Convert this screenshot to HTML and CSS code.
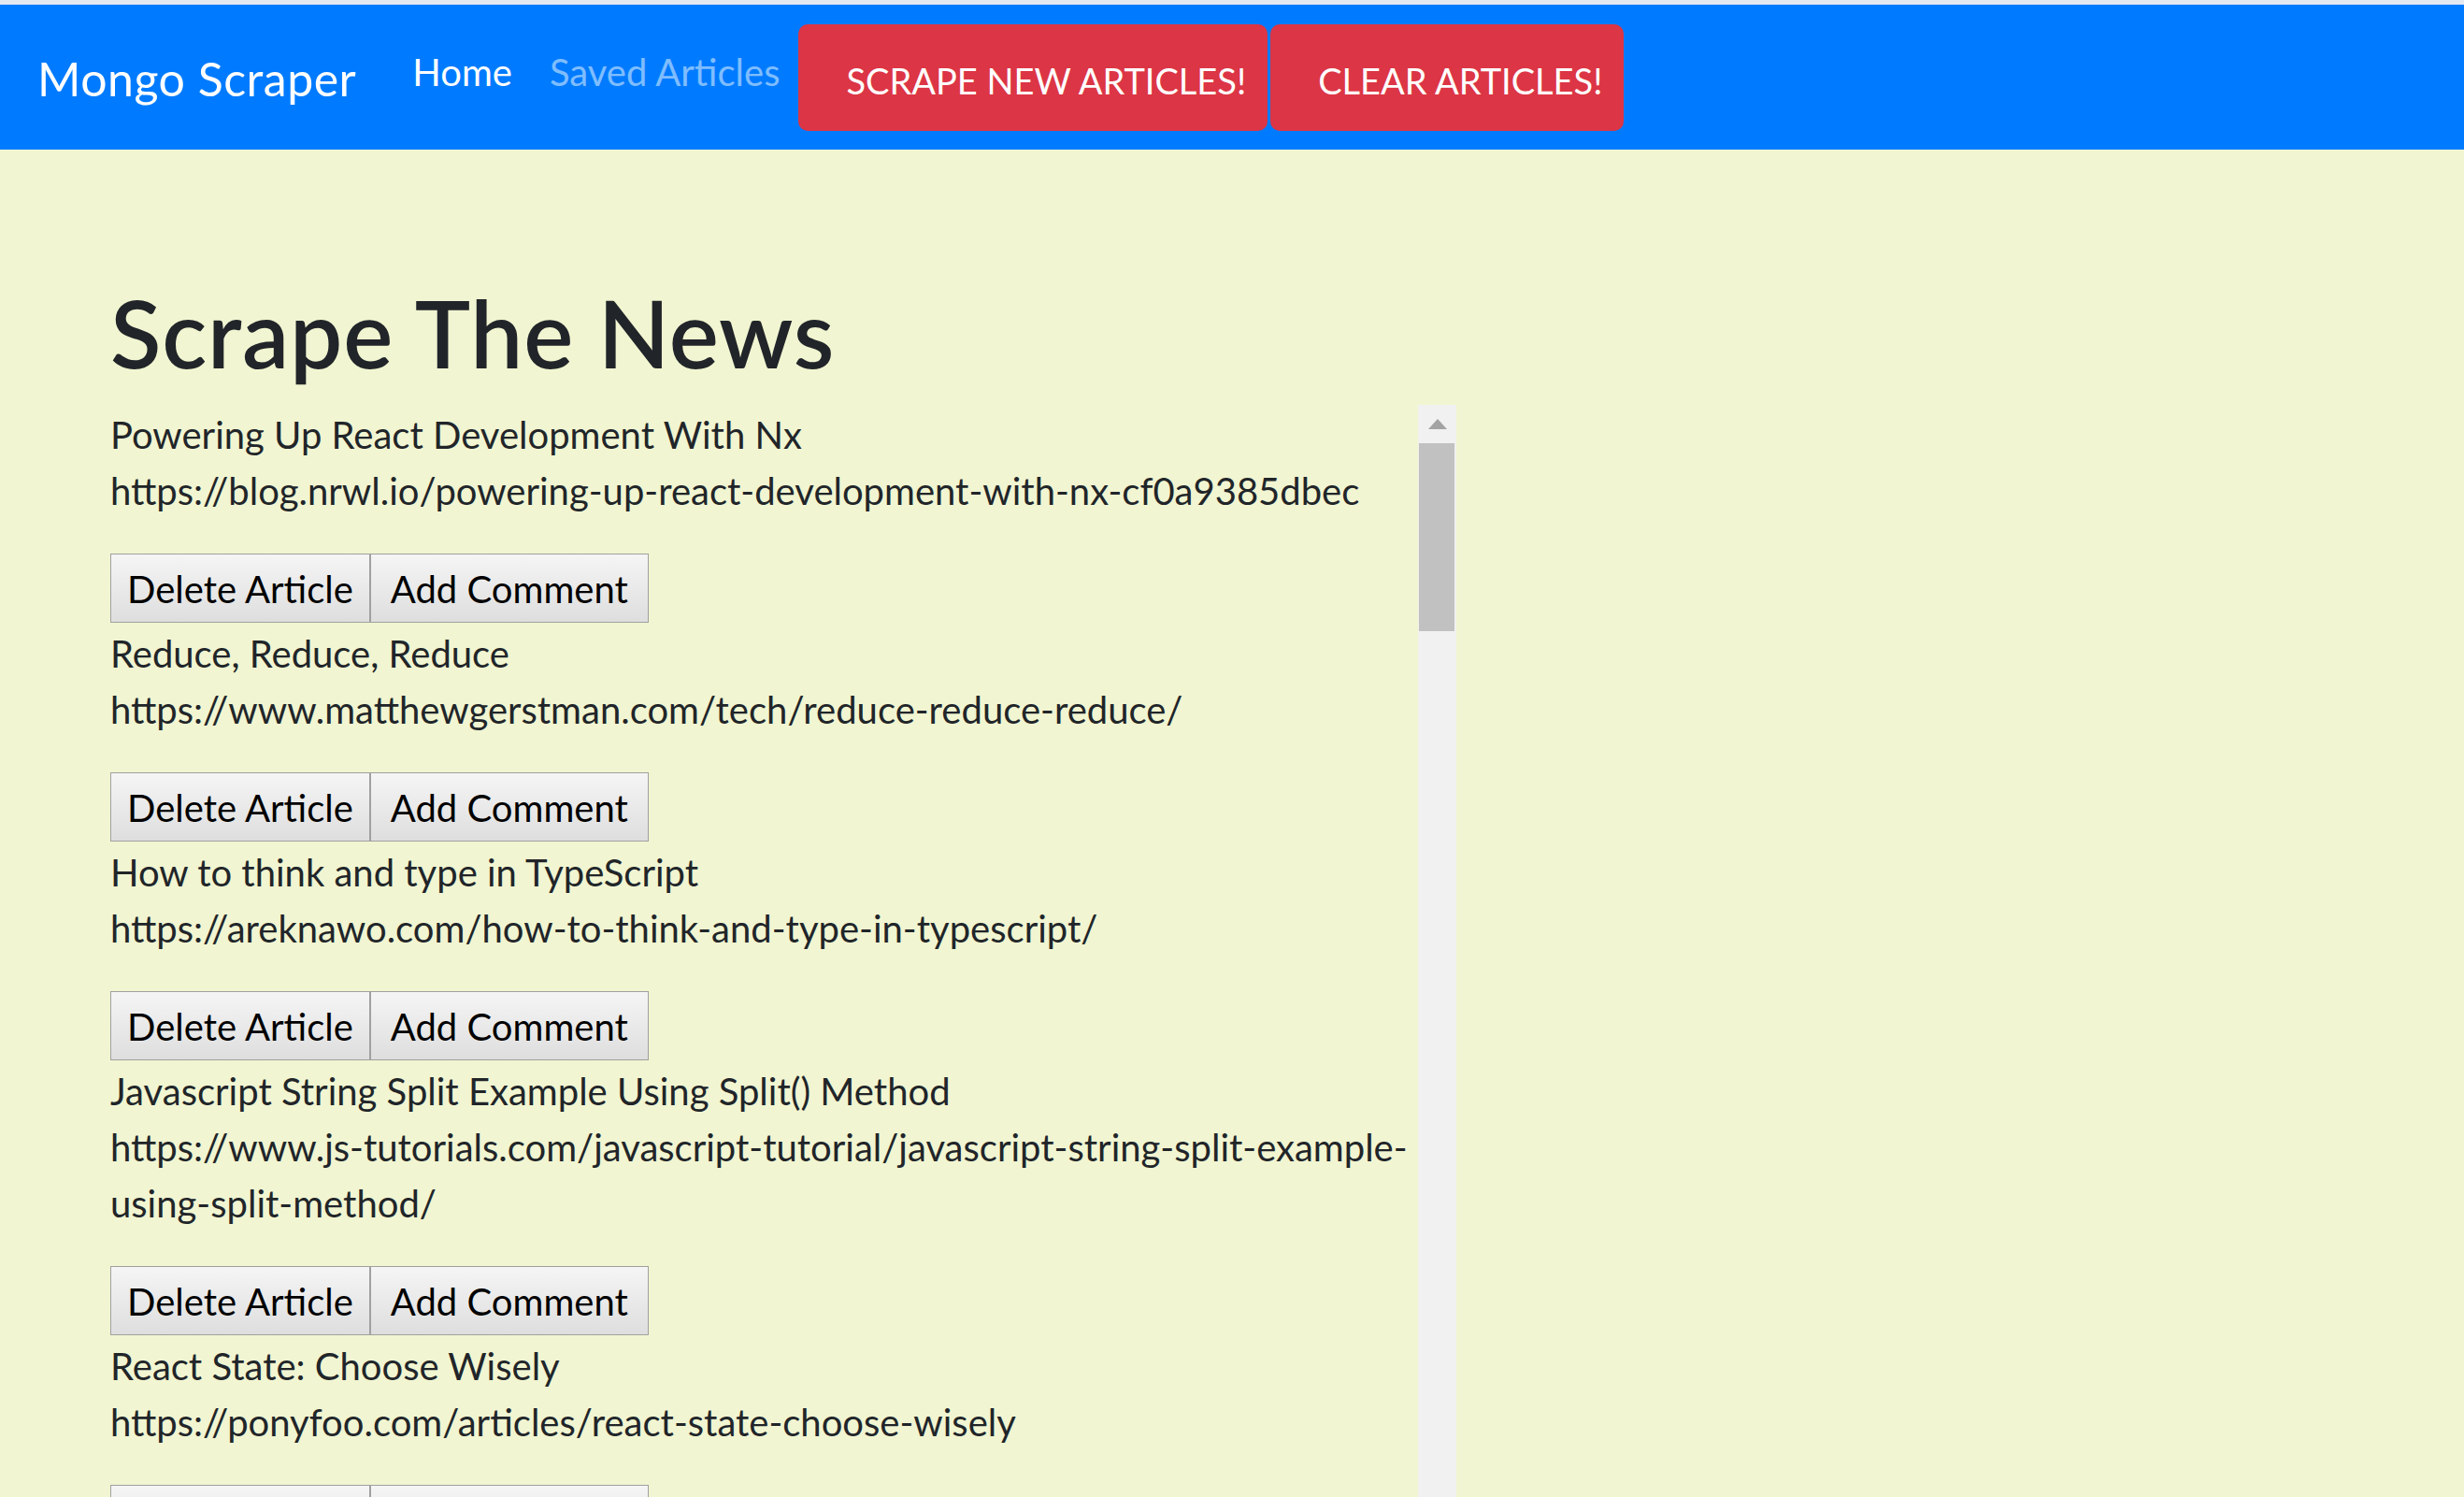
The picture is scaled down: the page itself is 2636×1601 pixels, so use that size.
FILE: index.html
```html
<!DOCTYPE html>
<html lang="en">
<head>
<meta charset="utf-8">
<title>Mongo Scraper</title>
<link rel="stylesheet" href="styles.css">
</head>
<body>
<nav class="navbar">
  <a class="brand" href="#">Mongo Scraper</a>
  <ul class="nav">
    <li><a class="nav-link active" href="#">Home</a></li>
    <li><a class="nav-link muted" href="#">Saved Articles</a></li>
  </ul>
  <button class="btn-red">SCRAPE NEW ARTICLES!</button>
  <button class="btn-red">CLEAR ARTICLES!</button>
</nav>
<main class="page">
  <h1 class="title">Scrape The News</h1>
  <div class="list-wrap">
    <div class="list">
      <div class="article">
        <p class="art-text">Powering Up React Development With Nx<br>https://blog.nrwl.io/powering-up-react-development-with-nx-cf0a9385dbec</p>
        <div class="art-btns"><button class="btn-sys btn-del">Delete Article</button><button class="btn-sys btn-add">Add Comment</button></div>
      </div>
      <div class="article">
        <p class="art-text">Reduce, Reduce, Reduce<br>https://www.matthewgerstman.com/tech/reduce-reduce-reduce/</p>
        <div class="art-btns"><button class="btn-sys btn-del">Delete Article</button><button class="btn-sys btn-add">Add Comment</button></div>
      </div>
      <div class="article">
        <p class="art-text">How to think and type in TypeScript<br>https://areknawo.com/how-to-think-and-type-in-typescript/</p>
        <div class="art-btns"><button class="btn-sys btn-del">Delete Article</button><button class="btn-sys btn-add">Add Comment</button></div>
      </div>
      <div class="article">
        <p class="art-text">Javascript String Split Example Using Split() Method<br>https://www.js-tutorials.com/javascript-tutorial/javascript-string-split-example-using-split-method/</p>
        <div class="art-btns"><button class="btn-sys btn-del">Delete Article</button><button class="btn-sys btn-add">Add Comment</button></div>
      </div>
      <div class="article">
        <p class="art-text">React State: Choose Wisely<br>https://ponyfoo.com/articles/react-state-choose-wisely</p>
        <div class="art-btns"><button class="btn-sys btn-del">Delete Article</button><button class="btn-sys btn-add">Add Comment</button></div>
      </div>
      <div class="article">
        <p class="art-text">Understanding Promises in JavaScript<br>https://hackernoon.com/understanding-promises-in-javascript-13d99df067c1</p>
        <div class="art-btns"><button class="btn-sys btn-del">Delete Article</button><button class="btn-sys btn-add">Add Comment</button></div>
      </div>
    </div>
    <div class="scrollbar">
      <div class="sb-up"><span class="sb-arrow"></span></div>
      <div class="sb-thumb"></div>
    </div>
  </div>
</main>
</body>
</html>
```
FILE: styles.css
```css
html, body {
  margin: 0;
  padding: 0;
  height: 100%;
  overflow: hidden;
}
body {
  display: flex;
  flex-direction: column;
  background: #f1f5d1;
  border-top: 5px solid #e4e8f0;
  box-sizing: border-box;
  font-family: "Lato", "Open Sans", sans-serif;
  color: #212529;
}
.navbar {
  flex: 0 0 auto;
  height: 155px;
  box-sizing: border-box;
  background: #007bff;
  display: flex;
  align-items: center;
  padding: 0 40px;
}
.brand {
  font-size: 50px;
  line-height: 75px;
  letter-spacing: 0.5px;
  color: #fff;
  text-decoration: none;
  margin-right: 40px;
  padding-top: 4px;
}
.nav {
  display: flex;
  list-style: none;
  margin: 0 0 12px 0;
  padding: 0;
}
.nav-link {
  display: block;
  padding: 0 20px;
  font-size: 40px;
  line-height: 60px;
  text-decoration: none;
}
.nav-link.active { color: #fff; }
.nav-link.muted { color: rgba(255,255,255,0.5); }
.btn-red {
  height: 114px;
  box-sizing: border-box;
  background: #dc3545;
  color: #fff;
  border: 0;
  border-radius: 10px;
  font-family: inherit;
  font-size: 38px;
  line-height: 60px;
  padding: 30px 23px 24px 51px;
  margin-right: 3px;
}
.page {
  flex: 1 1 auto;
  min-height: 0;
  display: flex;
  flex-direction: column;
  padding-left: 118px;
}
.title {
  margin: 135px 0 17px 0;
  font-size: 100px;
  line-height: 120px;
  font-weight: 600;
  letter-spacing: 0.8px;
}
.list-wrap {
  flex: 1 1 auto;
  min-height: 0;
  width: 1440px;
  display: flex;
}
.list {
  flex: 1 1 auto;
  overflow: hidden;
}
.art-text {
  margin: 0 0 37px 0;
  padding-top: 3px;
  font-size: 40px;
  line-height: 60px;
}
.art-btns {
  display: flex;
}
.btn-sys {
  height: 74px;
  box-sizing: border-box;
  border: 1px solid #a0a0a0;
  background: linear-gradient(#f5f5f5, #dedede);
  color: #000;
  font-family: inherit;
  font-size: 40px;
  line-height: 60px;
  padding: 2px 20px 0 20px;
}
.btn-del { padding-left: 17px; padding-right: 17px; }
.btn-add { padding-left: 21px; padding-right: 21px; }
.scrollbar {
  flex: 0 0 41px;
  background: #f1f1f1;
  display: flex;
  flex-direction: column;
  margin-top: 1px;
}
.sb-up {
  height: 41px;
  display: flex;
  align-items: center;
  justify-content: center;
}
.sb-arrow {
  width: 0;
  height: 0;
  border-left: 10px solid transparent;
  border-right: 10px solid transparent;
  border-bottom: 11px solid #a3a3a3;
}
.sb-thumb {
  height: 201px;
  margin: 0 2px 0 1px;
  background: #c1c1c1;
}
```
